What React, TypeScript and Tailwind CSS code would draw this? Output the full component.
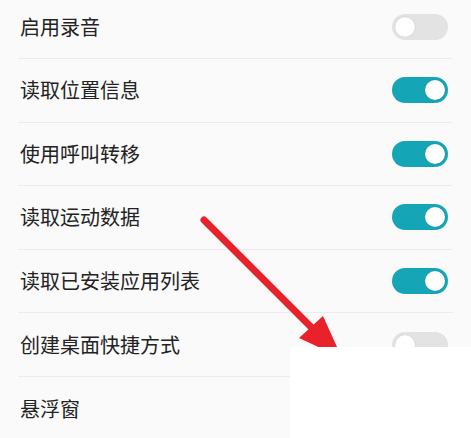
const rows = [
  { label: "启用录音", on: false },
  { label: "读取位置信息", on: true },
  { label: "使用呼叫转移", on: true },
  { label: "读取运动数据", on: true },
  { label: "读取已安装应用列表", on: true },
  { label: "创建桌面快捷方式", on: false },
  { label: "悬浮窗", on: null },
];

const Toggle = ({ on }: { on: boolean }) => (
  <div
    className={`w-[56px] h-[26px] rounded-full flex items-center px-[3px] ${
      on ? "bg-[#14a5b7] justify-end" : "bg-[#e3e3e3] justify-start"
    }`}
  >
    <div className="w-[20px] h-[20px] rounded-full bg-white shadow-[0_0_1px_rgba(0,0,0,0.25)]" />
  </div>
);

export default function App() {
  return (
    <div
      className="relative w-[471px] h-[438px] overflow-hidden bg-[#fafafa] text-[#222222]"
      style={{ fontFamily: '"Noto Sans CJK SC", "Noto Sans", sans-serif' }}
    >
      <div className="flex flex-col -mt-[4.6px]">
        {rows.map((r, i) => (
          <div
            key={r.label}
            className={`h-[63.6px] mx-[18px] flex items-center justify-between pl-[2px] pr-[5px] ${
              i < rows.length - 1 ? "border-b border-[#ececec]" : ""
            }`}
          >
            <span className="text-[20px] leading-none">{r.label}</span>
            {r.on !== null && <Toggle on={r.on} />}
          </div>
        ))}
      </div>

      {/* red arrow annotation */}
      <svg className="absolute left-0 top-0" width="471" height="438" viewBox="0 0 471 438">
        <line x1="204" y1="220" x2="318" y2="334" stroke="#e8212b" strokeWidth="7" strokeLinecap="round" />
        <polygon points="299,338 323,316 342,358" fill="#e8212b" />
      </svg>

      {/* white cover */}
      <div className="absolute left-[290px] top-[347px] w-[181px] h-[91px] bg-white" />
    </div>
  );
}
